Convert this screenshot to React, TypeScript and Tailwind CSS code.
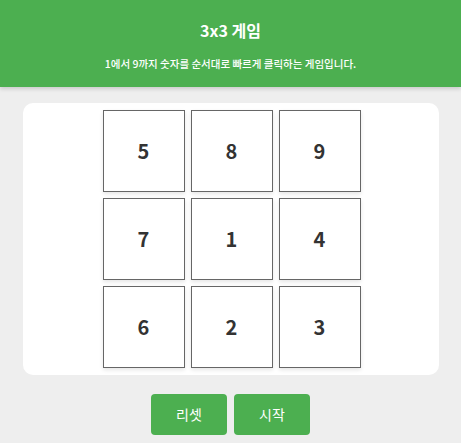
import React from "react";

const nums = [5, 8, 9, 7, 1, 4, 6, 2, 3];

export default function App() {
  return (
    <div
      className="min-h-[443px] bg-[#eeeeee]"
      style={{ fontFamily: '"Noto Sans CJK KR", "Noto Sans", sans-serif' }}
    >
      <header className="h-[87px] bg-[#4caf50] text-white text-center pt-[18px] shadow-[0_2px_4px_rgba(0,0,0,0.15)]">
        <h1 className="text-[16px] leading-[24px] font-bold">3x3 게임</h1>
        <p className="mt-[14px] text-[10.5px] leading-[16px] font-medium">
          1에서 9까지 숫자를 순서대로 빠르게 클릭하는 게임입니다.
        </p>
      </header>
      <div className="mx-auto mt-[16px] w-[416px] h-[272px] bg-white rounded-[10px] flex justify-center py-[4px] pl-[2px]">
        <div className="grid grid-cols-3 w-[264px]">
          {nums.map((n) => (
            <div
              key={n}
              className="m-[3px] w-[82px] h-[82px] border border-[#666] bg-white flex items-center justify-center text-[20px] font-semibold text-[#333] shadow-[0_2px_4px_rgba(0,0,0,0.1)]"
            >
              {n}
            </div>
          ))}
        </div>
      </div>
      <div className="mt-[19px] flex justify-center gap-[7px]">
        <button className="w-[76px] h-[41px] rounded-[4px] bg-[#4caf50] text-white text-[14px]">
          리셋
        </button>
        <button className="w-[76px] h-[41px] rounded-[4px] bg-[#4caf50] text-white text-[14px]">
          시작
        </button>
      </div>
    </div>
  );
}
